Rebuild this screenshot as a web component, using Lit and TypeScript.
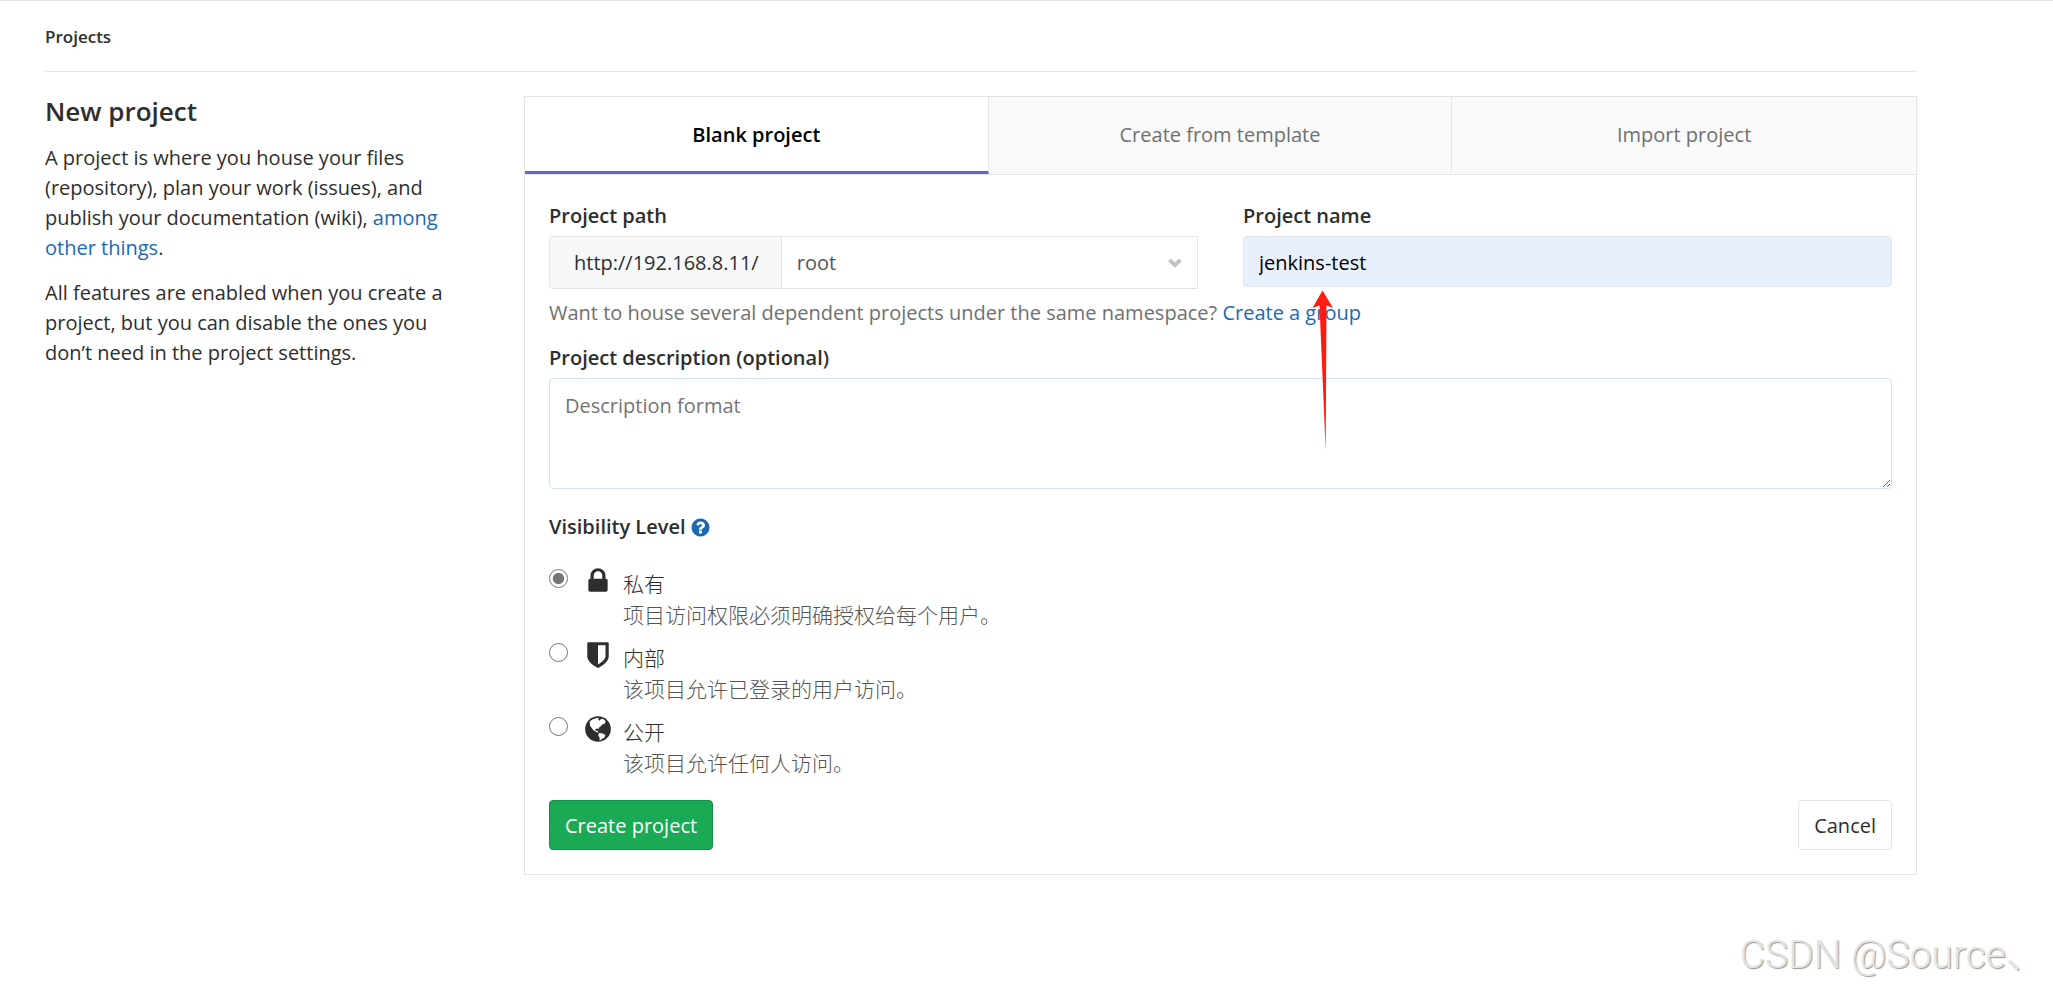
import { LitElement, html, css, svg } from "lit";
import { customElement, state } from "lit/decorators.js";
import { classMap } from "lit/directives/class-map.js";

interface Level {
  id: string;
  name: string;
  text: string;
  icon: unknown;
}

const lock = svg`<path d="M640 768h512v-192q0-106-75-181t-181-75-181 75-75 181v192zm832 96v576q0 40-28 68t-68 28h-960q-40 0-68-28t-28-68v-576q0-40 28-68t68-28h32v-192q0-184 132-316t316-132 316 132 132 316v192h32q40 0 68 28t28 68z"/>`;
const shield = svg`<path d="M1344 960v-640h-448v1137q119-63 213-137 235-184 235-360zm192-768v768q0 86-33.5 170.5t-83 150-118 127.5-126.5 103-121 77.5-89.5 49.5-42.5 20q-12 6-26 6t-26-6q-16-7-42.5-20t-89.5-49.5-121-77.5-126.5-103-118-127.5-83-150-33.5-170.5v-768q0-26 19-45t45-19h1152q26 0 45 19t19 45z"/>`;
const globe = svg`<circle cx="896" cy="896" r="768"/>
  <path fill="#fff" d="M400 450L560 330L760 260L960 240L900 330L980 400L1080 300L1200 290L1360 440L1290 580L1150 620L1070 730L960 800L920 900L830 860L740 900L760 1010L880 1000L920 1110L830 1090L640 980L520 830L420 680Z"/>
  <path fill="#fff" d="M960 1130L1130 1150L1340 1260L1280 1400L1130 1500L1000 1600L990 1400L910 1270Z"/>`;
const question = svg`<path d="M1024 1376v-192q0-14-9-23t-23-9h-192q-14 0-23 9t-9 23v192q0 14 9 23t23 9h192q14 0 23-9t9-23zm256-672q0-88-55.5-163t-138.5-116-170-41q-243 0-371 213-15 24 8 42l132 100q7 6 19 6 16 0 25-12 53-68 86-92 34-24 86-24 48 0 85.5 26t37.5 59q0 38-20 61t-68 45q-63 28-115.5 86.5t-52.5 125.5v36q0 14 9 23t23 9h192q14 0 23-9t9-23q0-19 21.5-49.5t54.5-49.5q32-18 49-28.5t46-35 44.5-48 28-60.5 12.5-81zm384 192q0 209-103 385.5t-279.5 279.5-385.5 103-385.5-103-279.5-279.5-103-385.5 103-385.5 279.5-279.5 385.5-103 385.5 103 279.5 279.5 103 385.5z"/>`;

@customElement("app-root")
export class AppRoot extends LitElement {
  @state() private tab = 0;
  @state() private level = "private";

  private tabs = ["Blank project", "Create from template", "Import project"];

  private levels: Level[] = [
    { id: "private", name: "私有", text: "项目访问权限必须明确授权给每个用户。", icon: lock },
    { id: "internal", name: "内部", text: "该项目允许已登录的用户访问。", icon: shield },
    { id: "public", name: "公开", text: "该项目允许任何人访问。", icon: globe },
  ];

  static styles = css`
    :host {
      display: block;
      position: relative;
      min-height: 100vh;
      box-sizing: border-box;
      border-top: 1px solid #e5e5e5;
      background: #fff;
      color: #2e2e2e;
      font: 20px/30px "Open Sans", "Noto Sans", "Noto Sans CJK SC", sans-serif;
    }
    * { box-sizing: border-box; }
    a { color: #1b69b6; text-decoration: none; }
    a:hover { text-decoration: underline; }
    p, h1, h2 { margin: 0; }
    input, select, textarea, button { font: inherit; color: inherit; margin: 0; }

    .container { max-width: 1920px; margin-left: 21px; padding: 0 24px; }
    .crumbs {
      height: 71px;
      padding-top: 2px;
      display: flex;
      align-items: center;
      border-bottom: 1px solid #e5e5e5;
      font-size: 17px;
      font-weight: 600;
    }
    .crumbs a { color: inherit; }
    .layout {
      display: grid;
      grid-template-columns: minmax(0, 434fr) minmax(0, 1393fr);
      gap: 45px;
      padding-top: 24px;
      align-items: start;
    }
    .intro { display: flex; flex-direction: column; gap: 15px; }
    .intro h1 { font-size: 26px; line-height: 30px; padding-bottom: 2px; font-weight: 600; }

    .card { border: 1px solid #e5e5e5; }
    .tabs {
      display: grid;
      grid-template-columns: repeat(3, 1fr);
      border-bottom: 1px solid #e5e5e5;
    }
    .tab {
      height: 77px;
      padding: 2px 0 0;
      border: 0;
      border-right: 1px solid #e5e5e5;
      border-bottom: 3px solid #fafafa;
      background: #fafafa;
      color: #707070;
      cursor: pointer;
    }
    .tab:last-child { border-right: 0; }
    .tab.active { background: #fff; color: #000; font-weight: 600; border-bottom-color: #6666c4; }

    .form { padding: 26px 24px 24px; }
    .row { display: grid; grid-template-columns: 1fr 1fr; gap: 45px; align-items: start; }
    .field { display: flex; flex-direction: column; gap: 5px; position: relative; }
    .label { font-weight: 600; }
    .path { display: flex; height: 53px; }
    .prefix {
      display: flex;
      align-items: center;
      padding: 0 22px 0 24px;
      border: 1px solid #e5e5e5;
      border-right: 0;
      border-radius: 4px 0 0 4px;
      background: #f7f8fa;
    }
    .picker { flex: 1; display: grid; align-items: stretch; }
    .picker > * { grid-area: 1 / 1; }
    .select {
      width: 100%;
      appearance: none;
      border: 1px solid #e5e5e5;
      border-radius: 0;
      padding: 0 40px 0 15px;
      background: #fff;
      color: #555;
    }
    .chevron { justify-self: end; align-self: center; margin-right: 15px; pointer-events: none; }
    .name {
      width: 100%;
      height: 51px;
      padding: 2px 15px 0;
      border: 1px solid #e5e5e5;
      border-radius: 4px;
      background: #e8f0fe;
      color: #000;
    }
    .arrow { position: absolute; left: 69px; top: 89px; z-index: 2; pointer-events: none; }
    .hint { color: #707070; padding: 9px 0 15px; }
    .description {
      display: block;
      width: 100%;
      height: 111px;
      padding: 12px 15px;
      border: 1px solid #d3e2f1;
      border-radius: 4px;
      background: #fff;
      resize: vertical;
    }
    .description::placeholder { color: #757575; }
    .visibility { display: flex; align-items: center; gap: 4px; padding: 23px 0; }
    .help { display: flex; }
    .help svg { fill: #1b69b6; }
    fieldset { border: 0; margin: 0; padding: 0; }
    .levels { display: flex; flex-direction: column; gap: 9px; }
    .level { display: grid; grid-template-columns: 19px 30px 1fr; column-gap: 15px; }
    .level input { width: 19px; height: 19px; margin-top: 4px; accent-color: #767676; }
    .level svg { fill: #2e2e2e; margin-top: 1px; }
    .words {
      display: flex;
      flex-direction: column;
      font: 300 21px/31px "Noto Sans CJK SC", sans-serif;
      margin-left: -5px;
      padding-top: 3px;
    }
    .note { color: #555; }
    .actions { display: flex; justify-content: space-between; padding-top: 22px; }
    .btn {
      height: 50px;
      padding: 2px 15px 0;
      border: 1px solid #e5e5e5;
      border-radius: 4px;
      background: #fff;
      cursor: pointer;
    }
    .create { background: #1aaa55; border-color: #168f48; color: #fff; }
    .watermark {
      position: absolute;
      right: 8px;
      bottom: 9px;
      font: 300 39px/48px Roboto, "Noto Sans CJK SC", sans-serif;
      color: #e4e4e4;
      text-shadow: 1px 1px 1px #999;
      pointer-events: none;
    }
  `;

  render() {
    return html`
      <main class="container">
        <nav class="crumbs"><a href="#projects">Projects</a></nav>
        <div class="layout">
          <section class="intro">
            <h1>New project</h1>
            <p>A project is where you house your files (repository), plan your work (issues), and publish your documentation (wiki), <a href="#features">among other things</a>.</p>
            <p>All features are enabled when you create a project, but you can disable the ones you don’t need in the project settings.</p>
          </section>
          <section class="card">
            <div class="tabs" role="tablist">
              ${this.tabs.map((name, i) => html`<button
                type="button" role="tab" aria-selected=${i === this.tab}
                class=${classMap({ tab: true, active: i === this.tab })}
                @click=${() => (this.tab = i)}>${name}</button>`)}
            </div>
            <form class="form" @submit=${(e: Event) => e.preventDefault()}>
              <div class="row">
                <div class="field">
                  <label class="label" for="path">Project path</label>
                  <div class="path">
                    <span class="prefix">http://192.168.8.11/</span>
                    <span class="picker">
                      <select class="select" id="path"><option>root</option></select>
                      <svg class="chevron" width="16" height="12" viewBox="0 0 16 12" fill="none" stroke="#c4c4c4" stroke-width="4">
                        <path d="M2.500 3l5.500 5l5.500-5"/>
                      </svg>
                    </span>
                  </div>
                </div>
                <div class="field">
                  <label class="label" for="name">Project name</label>
                  <input class="name" id="name" type="text" value="jenkins-test" autocomplete="off">
                  <svg class="arrow" width="22" height="162" viewBox="0 0 22 162" fill="#ff1d12">
                    <path d="M10.500 0.500L21 18L14.500 15.500L13.700 161L7.500 15.500L0.500 18Z"/>
                  </svg>
                </div>
              </div>
              <p class="hint">Want to house several dependent projects under the same namespace? <a href="#group">Create a group</a></p>
              <div class="field">
                <label class="label" for="desc">Project description (optional)</label>
                <textarea class="description" id="desc" placeholder="Description format"></textarea>
              </div>
              <fieldset aria-labelledby="visibility">
                <div class="visibility">
                  <span class="label" id="visibility">Visibility Level</span>
                  <a class="help" href="#help" aria-label="Help"><svg width="21" height="21" viewBox="0 0 1792 1792">${question}</svg></a>
                </div>
                <div class="levels">
                  ${this.levels.map((l) => html`<label class="level">
                    <input type="radio" name="level" value=${l.id}
                      .checked=${l.id === this.level} @change=${() => (this.level = l.id)}>
                    <svg width="30" height="30" viewBox="0 0 1792 1792">${l.icon}</svg>
                    <span class="words"><span>${l.name}</span><span class="note">${l.text}</span></span>
                  </label>`)}
                </div>
              </fieldset>
              <div class="actions">
                <button class="btn create" type="submit">Create project</button>
                <button class="btn" type="button">Cancel</button>
              </div>
            </form>
          </section>
        </div>
      </main>
      <div class="watermark">CSDN @Source、</div>
    `;
  }
}
